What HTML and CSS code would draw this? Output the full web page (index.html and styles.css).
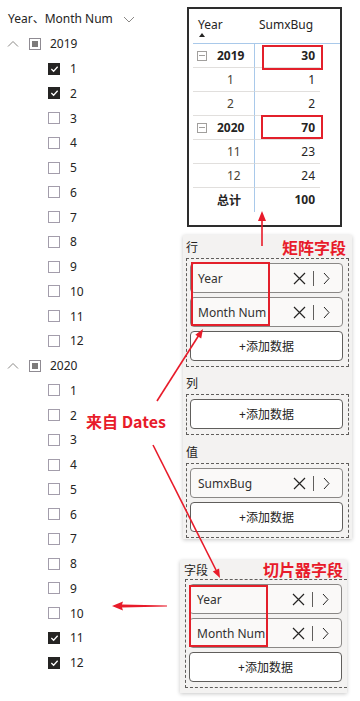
FILE: index.html
```html
<!DOCTYPE html>
<html lang="zh">
<head>
    <meta charset="UTF-8">
    <meta name="viewport" content="width=device-width, initial-scale=1.0">
    <title>Year Month Num</title>
    <link rel="stylesheet" href="styles.css">
</head>
<body>
    <div class="page">
        <!-- Slicer -->
        <div class="slicer">
            <div class="slicer-head">
                <span>Year、Month Num</span>
                <svg class="chev-down" viewBox="0 0 12 7"><polyline points="1,1 6,6 11,1"/></svg>
            </div>
            <ul class="tree">
                <li class="node year"><svg class="caret" viewBox="0 0 12 7"><polyline points="1,6.5 6,1.5 11,6.5"/></svg><span class="box part"></span><span>2019</span></li>
                <li class="node month"><span class="box on"><svg viewBox="0 0 10 8"><polyline points="1.5,4 4,6.5 8.5,1.5"/></svg></span><span>1</span></li>
                <li class="node month"><span class="box on"><svg viewBox="0 0 10 8"><polyline points="1.5,4 4,6.5 8.5,1.5"/></svg></span><span>2</span></li>
                <li class="node month"><span class="box"></span><span>3</span></li>
                <li class="node month"><span class="box"></span><span>4</span></li>
                <li class="node month"><span class="box"></span><span>5</span></li>
                <li class="node month"><span class="box"></span><span>6</span></li>
                <li class="node month"><span class="box"></span><span>7</span></li>
                <li class="node month"><span class="box"></span><span>8</span></li>
                <li class="node month"><span class="box"></span><span>9</span></li>
                <li class="node month"><span class="box"></span><span>10</span></li>
                <li class="node month"><span class="box"></span><span>11</span></li>
                <li class="node month"><span class="box"></span><span>12</span></li>
                <li class="node year"><svg class="caret" viewBox="0 0 12 7"><polyline points="1,6.5 6,1.5 11,6.5"/></svg><span class="box part"></span><span>2020</span></li>
                <li class="node month"><span class="box"></span><span>1</span></li>
                <li class="node month"><span class="box"></span><span>2</span></li>
                <li class="node month"><span class="box"></span><span>3</span></li>
                <li class="node month"><span class="box"></span><span>4</span></li>
                <li class="node month"><span class="box"></span><span>5</span></li>
                <li class="node month"><span class="box"></span><span>6</span></li>
                <li class="node month"><span class="box"></span><span>7</span></li>
                <li class="node month"><span class="box"></span><span>8</span></li>
                <li class="node month"><span class="box"></span><span>9</span></li>
                <li class="node month"><span class="box"></span><span>10</span></li>
                <li class="node month"><span class="box on"><svg viewBox="0 0 10 8"><polyline points="1.5,4 4,6.5 8.5,1.5"/></svg></span><span>11</span></li>
                <li class="node month"><span class="box on"><svg viewBox="0 0 10 8"><polyline points="1.5,4 4,6.5 8.5,1.5"/></svg></span><span>12</span></li>
            </ul>
        </div>

        <div class="side">
            <!-- Matrix -->
            <div class="matrix">
                <div class="mx-row mx-head">
                    <div class="hcell">Year<i class="sort"></i></div>
                    <div class="hcell">SumxBug</div>
                </div>
                <div class="mx-row">
                    <div class="c1 parent"><i class="minus"></i>2019</div>
                    <div class="c2 strong">30<span class="hl hl-30"></span></div>
                </div>
                <div class="mx-row">
                    <div class="c1 child">1</div>
                    <div class="c2">1</div>
                </div>
                <div class="mx-row">
                    <div class="c1 child">2</div>
                    <div class="c2">2</div>
                </div>
                <div class="mx-row">
                    <div class="c1 parent"><i class="minus"></i>2020</div>
                    <div class="c2 strong">70<span class="hl hl-70"></span></div>
                </div>
                <div class="mx-row">
                    <div class="c1 child">11</div>
                    <div class="c2">23</div>
                </div>
                <div class="mx-row">
                    <div class="c1 child">12</div>
                    <div class="c2">24</div>
                </div>
                <div class="mx-row total">
                    <div class="c1">总计</div>
                    <div class="c2">100</div>
                </div>
            </div>

            <!-- Matrix wells -->
            <div class="panel wells">
                <div class="well-label first"><span>行</span><span class="red-title">矩阵字段</span></div>
                <div class="well">
                    <div class="pill"><span class="pill-name">Year</span><svg class="x" viewBox="0 0 13 13"><path d="M1 1L12 12M12 1L1 12"/></svg><span class="sep"></span><svg class="more" viewBox="0 0 7 13"><polyline points="1,1 6,6.5 1,12"/></svg></div>
                    <div class="pill"><span class="pill-name">Month Num</span><svg class="x" viewBox="0 0 13 13"><path d="M1 1L12 12M12 1L1 12"/></svg><span class="sep"></span><svg class="more" viewBox="0 0 7 13"><polyline points="1,1 6,6.5 1,12"/></svg></div>
                    <div class="add">+添加数据</div>
                    <span class="hl hl-rows"></span>
                </div>
                <div class="well-label second"><span>列</span></div>
                <div class="well">
                    <div class="add">+添加数据</div>
                </div>
                <div class="well-label third"><span>值</span></div>
                <div class="well">
                    <div class="pill"><span class="pill-name">SumxBug</span><svg class="x" viewBox="0 0 13 13"><path d="M1 1L12 12M12 1L1 12"/></svg><span class="sep"></span><svg class="more" viewBox="0 0 7 13"><polyline points="1,1 6,6.5 1,12"/></svg></div>
                    <div class="add">+添加数据</div>
                </div>
            </div>

            <!-- Slicer wells -->
            <div class="panel fields">
                <div class="well-label"><span>字段</span><span class="red-title">切片器字段</span></div>
                <div class="well">
                    <div class="pill"><span class="pill-name">Year</span><svg class="x" viewBox="0 0 13 13"><path d="M1 1L12 12M12 1L1 12"/></svg><span class="sep"></span><svg class="more" viewBox="0 0 7 13"><polyline points="1,1 6,6.5 1,12"/></svg></div>
                    <div class="pill"><span class="pill-name">Month Num</span><svg class="x" viewBox="0 0 13 13"><path d="M1 1L12 12M12 1L1 12"/></svg><span class="sep"></span><svg class="more" viewBox="0 0 7 13"><polyline points="1,1 6,6.5 1,12"/></svg></div>
                    <div class="add">+添加数据</div>
                    <span class="hl hl-fields"></span>
                </div>
            </div>
        </div>
    </div>

    <!-- Annotations -->
    <svg class="notes" viewBox="0 0 360 701">
        <line x1="262" y1="246" x2="262" y2="219"/>
        <polygon points="262,211 258,221 266,221"/>
        <line x1="157" y1="401" x2="199" y2="335"/>
        <polygon points="203,329 201.2,338.5 195.3,334.7"/>
        <line x1="153" y1="445" x2="216" y2="570"/>
        <polygon points="220,578 219.1,568.4 212.8,571.5"/>
        <polygon points="112,606 123,601.5 122,604.6 167,605.4 167,606.6 122,607.4 123,610.5"/>
    </svg>
    <div class="note-from">来自 Dates</div>
</body>
</html>
```

FILE: styles.css
```css
* {
    box-sizing: border-box;
}

body {
    margin: 0;
    width: 360px;
    height: 701px;
    position: relative;
    overflow: hidden;
    background: #fff;
    font-family: "Noto Sans", "Noto Sans CJK SC", sans-serif;
    font-size: 12px;
    color: #252423;
}

.page {
    display: flex;
    align-items: flex-start;
}

/* slicer */
.slicer {
    width: 178px;
    flex: none;
    padding-top: 12px;
}

.slicer-head {
    display: flex;
    justify-content: space-between;
    align-items: center;
    width: 135px;
    height: 14px;
    padding-left: 8px;
    line-height: 14px;
}

.chev-down,
.caret {
    width: 12px;
    height: 7px;
    fill: none;
    stroke: #8a8886;
    stroke-width: 1;
}

.tree {
    list-style: none;
    margin: 5.6px 0 0;
    padding: 0;
}

.node {
    display: flex;
    align-items: center;
    height: 24.76px;
}

.node.year {
    padding-left: 7px;
}

.node.month {
    padding-left: 48px;
}

.caret {
    margin-right: 10px;
}

.box {
    width: 12px;
    height: 12px;
    flex: none;
    border: 1px solid #a39dab;
    display: flex;
    align-items: center;
    justify-content: center;
}

.node.year .box {
    margin-right: 9px;
    border-color: #8f8b92;
}

.node.month .box {
    margin-right: 10px;
}

.box.part::after {
    content: "";
    width: 6px;
    height: 6px;
    background: #7d7b7a;
}

.box.on {
    background: #252423;
    border-color: #252423;
}

.box svg {
    width: 9px;
    height: 8px;
    fill: none;
    stroke: #fff;
    stroke-width: 1.4;
}

/* right side */
.side {
    display: flex;
    flex-direction: column;
    align-items: flex-start;
}

.matrix {
    width: 155px;
    height: 220px;
    margin: 7px 0 0 9px;
    padding-left: 4px;
    border: 2px solid #2d2d2d;
    background: #fff;
}

.mx-row {
    display: grid;
    grid-template-columns: 61px 66px;
    height: 24px;
}

.mx-head {
    height: 35px;
    border-bottom: 1px solid #a9c9ea;
}

.hcell {
    padding: 9px 0 0 5px;
    line-height: 14px;
}

.sort {
    display: block;
    width: 0;
    margin: 1px 0 0 1px;
    border-left: 3.5px solid transparent;
    border-right: 3.5px solid transparent;
    border-bottom: 4px solid #252423;
}

.c1,
.c2 {
    height: 24px;
    line-height: 23px;
    border-bottom: 1px solid #e1dfdd;
}

.c1 {
    display: flex;
    align-items: center;
    color: #4a4234;
}

.c2 {
    position: relative;
    padding-right: 5px;
    text-align: right;
    border-left: 1px solid #a9c9ea;
}

.c1.parent {
    padding-left: 4px;
    font-weight: bold;
    color: #252423;
}

.c1.child {
    padding-left: 34px;
}

.c2.strong {
    font-weight: bold;
}

.total .c1,
.total .c2 {
    border-bottom: none;
    font-weight: bold;
    color: #252423;
}

.total .c1 {
    padding-left: 24px;
}

.minus {
    width: 10px;
    height: 10px;
    margin-right: 10px;
    border: 1px solid #a19f9d;
    display: flex;
    align-items: center;
    justify-content: center;
}

.minus::after {
    content: "";
    width: 6px;
    height: 1px;
    background: #a19f9d;
}

/* red highlight boxes */
.hl {
    position: absolute;
    border: 2px solid #e3202b;
}

.hl-30 {
    left: 7px;
    top: 1px;
    width: 61px;
    height: 25px;
}

.hl-70 {
    left: 6px;
    top: -1px;
    width: 62px;
    height: 24px;
}

.hl-rows {
    left: 4px;
    top: 3px;
    width: 79px;
    height: 64px;
}

.hl-fields {
    left: 3px;
    top: 5px;
    width: 79px;
    height: 62px;
}

/* field wells */
.panel {
    background: #f3f2f1;
    box-shadow: 0 1px 4px rgba(0, 0, 0, 0.22);
}

.wells {
    width: 169px;
    margin: 8px 0 0 5px;
    padding: 0 3px 1px;
}

.fields {
    width: 167px;
    margin: 21px 0 0 2px;
    padding: 0 0 5px 5px;
}

.well-label {
    display: flex;
    justify-content: space-between;
    align-items: center;
    height: 22px;
    padding-right: 3px;
}

.well-label.first {
    margin-top: 1px;
}

.well-label.second {
    margin-top: 5px;
}

.well-label.third {
    margin-top: 6px;
}

.fields .well-label {
    height: 19px;
    margin-left: -1px;
    padding-right: 4px;
}

.red-title {
    font-family: "Noto Sans CJK SC", sans-serif;
    font-size: 16px;
    font-weight: bold;
    line-height: 19px;
    color: #e81b2a;
}

.well {
    position: relative;
    display: flex;
    flex-direction: column;
    gap: 4px;
    padding: 4px 5px 5px 3px;
    border: 1px dashed #605e5c;
}

.fields .well {
    border-right: none;
}

.pill {
    display: flex;
    align-items: center;
    height: 30px;
    padding: 0 12px 0 7px;
    border: 1px solid #8a8886;
    border-radius: 4px;
    background: #faf9f8;
    color: #323130;
}

.pill-name {
    flex: 1;
}

.x {
    width: 13px;
    height: 13px;
    fill: none;
    stroke: #252423;
    stroke-width: 1.2;
}

.sep {
    width: 1px;
    height: 15px;
    margin: 0 9px 0 7px;
    background: #605e5c;
}

.more {
    width: 7px;
    height: 13px;
    fill: none;
    stroke: #252423;
    stroke-width: 1;
}

.add {
    display: flex;
    align-items: center;
    justify-content: center;
    height: 30px;
    border: 1px solid #605e5c;
    border-radius: 4px;
    background: #fff;
}

/* annotations */
.notes {
    position: absolute;
    left: 0;
    top: 0;
    width: 360px;
    height: 701px;
    pointer-events: none;
}

.notes line {
    stroke: #e81b2a;
    stroke-width: 1.6;
}

.notes polygon {
    fill: #e81b2a;
}

.note-from {
    position: absolute;
    left: 86px;
    top: 410px;
    font-family: "Noto Sans CJK SC", sans-serif;
    font-size: 16px;
    font-weight: bold;
    line-height: 22px;
    color: #e81b2a;
}
```
